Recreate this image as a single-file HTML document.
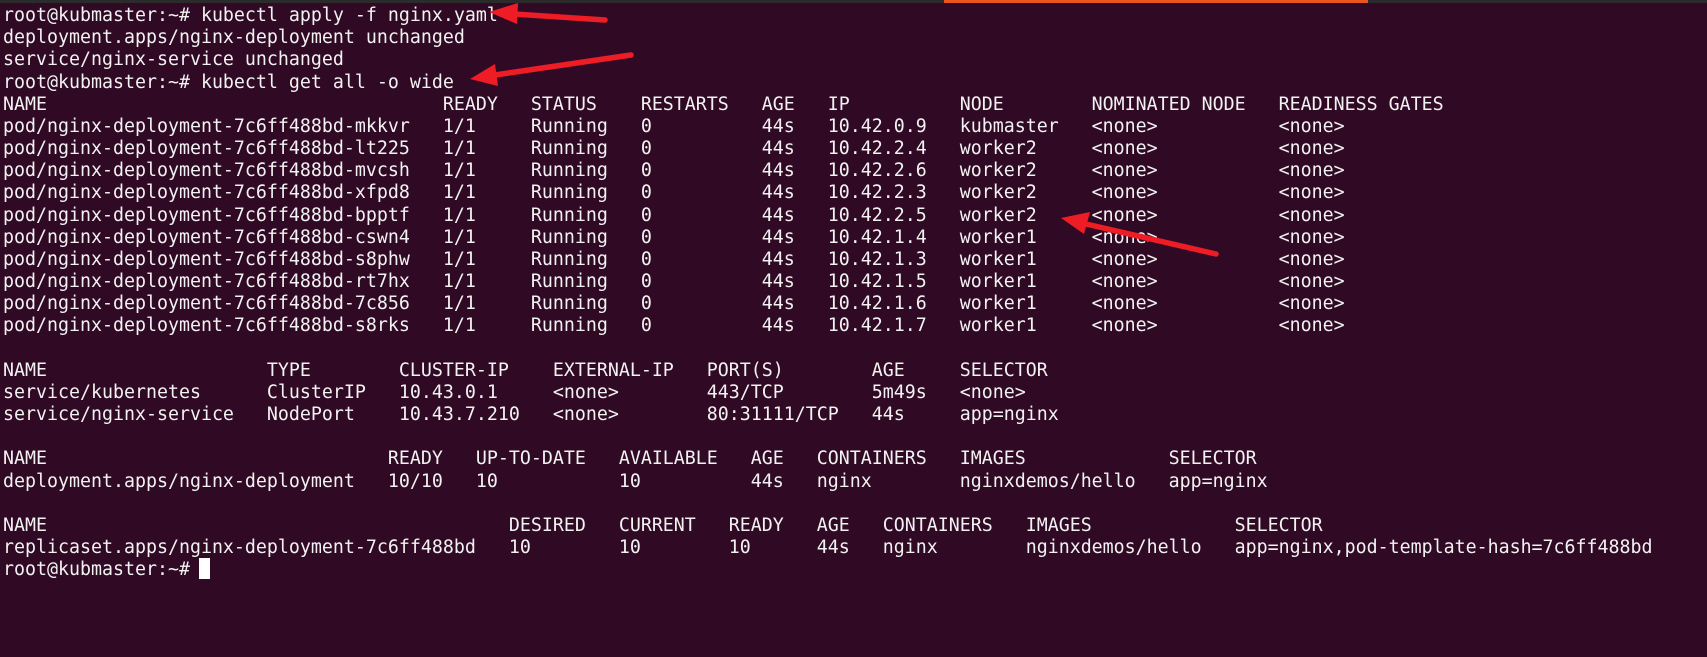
<!DOCTYPE html>
<html><head><meta charset="utf-8"><style>
html,body{margin:0;padding:0;}
body{width:1707px;height:657px;background:#300a24;overflow:hidden;position:relative;}
.top{position:absolute;left:0;top:0;width:1707px;height:3px;background:#2b2b2b;}
.org{position:absolute;left:944px;top:0;width:424px;height:3px;background:#e95420;}
pre{position:absolute;left:3px;top:5px;margin:0;font-family:"DejaVu Sans Mono","Liberation Mono",monospace;font-size:18.27px;line-height:22.17px;color:#f2f2f2;}
.cur{position:absolute;left:199px;top:558px;width:11px;height:21px;background:#fff;}
svg{position:absolute;left:0;top:0;}
</style></head><body>
<div class="top"></div><div class="org"></div>
<pre>root@kubmaster:~# kubectl apply -f nginx.yaml
deployment.apps/nginx-deployment unchanged
service/nginx-service unchanged
root@kubmaster:~# kubectl get all -o wide
NAME                                    READY   STATUS    RESTARTS   AGE   IP          NODE        NOMINATED NODE   READINESS GATES
pod/nginx-deployment-7c6ff488bd-mkkvr   1/1     Running   0          44s   10.42.0.9   kubmaster   &lt;none&gt;           &lt;none&gt;
pod/nginx-deployment-7c6ff488bd-lt225   1/1     Running   0          44s   10.42.2.4   worker2     &lt;none&gt;           &lt;none&gt;
pod/nginx-deployment-7c6ff488bd-mvcsh   1/1     Running   0          44s   10.42.2.6   worker2     &lt;none&gt;           &lt;none&gt;
pod/nginx-deployment-7c6ff488bd-xfpd8   1/1     Running   0          44s   10.42.2.3   worker2     &lt;none&gt;           &lt;none&gt;
pod/nginx-deployment-7c6ff488bd-bpptf   1/1     Running   0          44s   10.42.2.5   worker2     &lt;none&gt;           &lt;none&gt;
pod/nginx-deployment-7c6ff488bd-cswn4   1/1     Running   0          44s   10.42.1.4   worker1     &lt;none&gt;           &lt;none&gt;
pod/nginx-deployment-7c6ff488bd-s8phw   1/1     Running   0          44s   10.42.1.3   worker1     &lt;none&gt;           &lt;none&gt;
pod/nginx-deployment-7c6ff488bd-rt7hx   1/1     Running   0          44s   10.42.1.5   worker1     &lt;none&gt;           &lt;none&gt;
pod/nginx-deployment-7c6ff488bd-7c856   1/1     Running   0          44s   10.42.1.6   worker1     &lt;none&gt;           &lt;none&gt;
pod/nginx-deployment-7c6ff488bd-s8rks   1/1     Running   0          44s   10.42.1.7   worker1     &lt;none&gt;           &lt;none&gt;

NAME                    TYPE        CLUSTER-IP    EXTERNAL-IP   PORT(S)        AGE     SELECTOR
service/kubernetes      ClusterIP   10.43.0.1     &lt;none&gt;        443/TCP        5m49s   &lt;none&gt;
service/nginx-service   NodePort    10.43.7.210   &lt;none&gt;        80:31111/TCP   44s     app=nginx

NAME                               READY   UP-TO-DATE   AVAILABLE   AGE   CONTAINERS   IMAGES             SELECTOR
deployment.apps/nginx-deployment   10/10   10           10          44s   nginx        nginxdemos/hello   app=nginx

NAME                                          DESIRED   CURRENT   READY   AGE   CONTAINERS   IMAGES             SELECTOR
replicaset.apps/nginx-deployment-7c6ff488bd   10        10        10      44s   nginx        nginxdemos/hello   app=nginx,pod-template-hash=7c6ff488bd
root@kubmaster:~# </pre>
<div class="cur"></div>
<svg width="1707" height="657">
<g stroke="#ee1c25" stroke-width="5.5" stroke-linecap="round" fill="#ee1c25">
<line x1="605" y1="20" x2="514" y2="14"/>
<polygon stroke="none" points="489,12 518,3 517,24"/>
<line x1="631" y1="55" x2="495" y2="75"/>
<polygon stroke="none" points="470,79 495,64 498,86"/>
<line x1="1216" y1="254" x2="1086" y2="224"/>
<polygon stroke="none" points="1061,218 1090,212 1084,234"/>
</g>
</svg>
</body></html>
